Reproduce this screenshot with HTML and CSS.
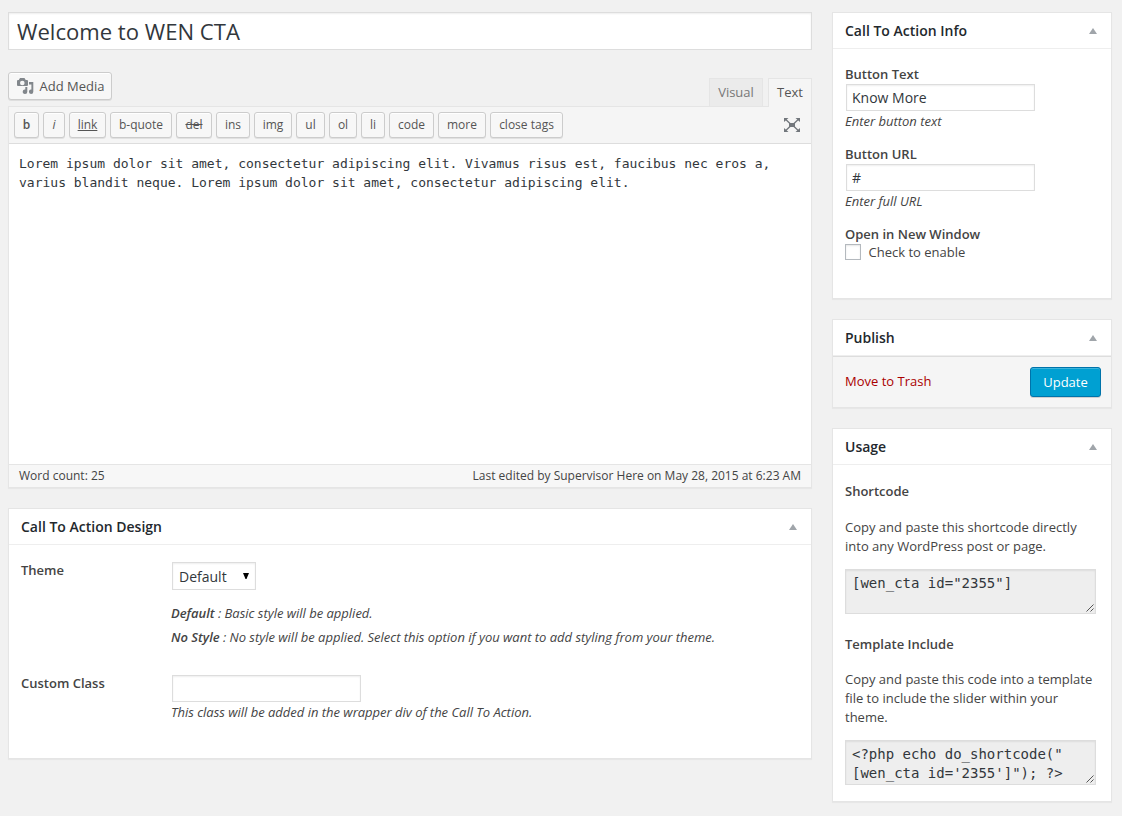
FILE: index.html
```html
<!DOCTYPE html>
<html lang="en">
<head>
<meta charset="utf-8">
<title>Edit Call To Action</title>
<link rel="stylesheet" href="styles.css">
</head>
<body>
<div class="page">
  <main class="main">
    <input class="title" type="text" value="Welcome to WEN CTA" aria-label="Title">
    <div class="editor-tools">
      <button class="btn add-media"><svg class="media-icon" viewBox="0 0 18 18" width="18" height="18"><path fill="#82878c" fill-rule="evenodd" d="M4 1h4.500l1.200 2H11q1 0 1 1V8q0 1-1 1H2q-1 0-1-1V4q0-1 1-1h.8zM6.300 3.700a2.300 2.300 0 1 0 0 4.600a2.300 2.300 0 0 0 0-4.600z"/><path fill="#82878c" d="M13 5h4.300v9.700a2.200 2.200 0 1 1-1.900-2.200V7.500H13zM9.300 10H11.300V14.700a2.300 2.300 0 1 1-2-2.200z"/></svg><span>Add Media</span></button>
      <div class="tabs"><a class="tab">Visual</a><a class="tab active">Text</a></div>
    </div>
    <section class="editor">
      <div class="toolbar">
        <button class="btn q w-b"><b>b</b></button><button class="btn q w-i"><i>i</i></button><button class="btn q w-link"><u>link</u></button><button class="btn q w-quote">b-quote</button><button class="btn q w-del"><s>del</s></button><button class="btn q w-ins">ins</button><button class="btn q w-img">img</button><button class="btn q w-ul">ul</button><button class="btn q w-ol">ol</button><button class="btn q w-li">li</button><button class="btn q w-code">code</button><button class="btn q w-more">more</button><button class="btn q w-close">close tags</button>
        <svg class="expand" viewBox="0 0 16 14" width="16" height="14"><g fill="#72777c"><path d="M5 5h6v4H5zM0 0h4.500L0 4zM16 0h-4.500L16 4zM0 14h4.500L0 10zM16 14h-4.500L16 10z"/><path fill="none" stroke="#72777c" stroke-width="1.300" d="M1.500 1.300L6 5.500M14.500 1.300L10 5.500M1.500 12.700L6 8.500M14.500 12.700L10 8.500"/></g></svg>
      </div>
      <div class="content">Lorem ipsum dolor sit amet, consectetur adipiscing elit. Vivamus risus est, faucibus nec eros a,<br>varius blandit neque. Lorem ipsum dolor sit amet, consectetur adipiscing elit.</div>
      <div class="status"><span>Word count: 25</span><span class="edited">Last edited by Supervisor Here on May 28, 2015 at 6:23 AM</span></div>
    </section>
    <section class="box design">
      <h2>Call To Action Design<span class="toggle"></span></h2>
      <div class="row theme">
        <label>Theme</label>
        <div>
          <div class="select">Default<svg class="caret" viewBox="0 0 6 6" width="6" height="6"><path d="M0 0h6L3.500 6h-1z"/></svg></div>
          <p class="note n1"><b>Default</b> : Basic style will be applied.</p>
          <p class="note n2"><b>No Style</b> : No style will be applied. Select this option if you want to add styling from your theme.</p>
        </div>
      </div>
      <div class="row">
        <label>Custom Class</label>
        <div><input class="field" type="text" aria-label="Custom Class"><p class="note n3">This class will be added in the wrapper div of the Call To Action.</p></div>
      </div>
    </section>
  </main>
  <aside class="side">
    <section class="box info">
      <h2>Call To Action Info<span class="toggle"></span></h2>
      <div class="group first"><label>Button Text</label><input class="field" type="text" value="Know More"><p class="note">Enter button text</p></div>
      <div class="group"><label>Button URL</label><input class="field" type="text" value="#"><p class="note">Enter full URL</p></div>
      <div class="group"><label>Open in New Window</label><div class="check"><span class="checkbox"></span><span>Check to enable</span></div></div>
    </section>
    <section class="box publish">
      <h2>Publish<span class="toggle"></span></h2>
      <div class="actions"><a class="trash">Move to Trash</a><button class="update">Update</button></div>
    </section>
    <section class="box usage">
      <h2>Usage<span class="toggle"></span></h2>
      <h4>Shortcode</h4>
      <p>Copy and paste this shortcode directly<br>into any WordPress post or page.</p>
      <div class="code">[wen_cta id="2355"]<svg class="grip" viewBox="0 0 8 8" width="8" height="8"><path d="M0.500 7.500l7-7M4.500 7.500l3-3"/></svg></div>
      <h4 class="second">Template Include</h4>
      <p>Copy and paste this code into a template<br>file to include the slider within your<br>theme.</p>
      <div class="code">&lt;?php echo do_shortcode("<br>[wen_cta id='2355']"); ?&gt;<svg class="grip" viewBox="0 0 8 8" width="8" height="8"><path d="M0.500 7.500l7-7M4.500 7.500l3-3"/></svg></div>
    </section>
  </aside>
</div>
</body>
</html>
```

FILE: styles.css
```css
* { box-sizing: border-box; }
body { margin: 0; background: #f1f1f1; color: #444; font: 13px/19px "Open Sans", sans-serif; }
h2, h4, p { margin: 0; }
input, button { font-family: inherit; margin: 0; }
b, label, h2, h4 { font-weight: 600; }
.page { display: flex; gap: 20px; padding: 12px 10px 0 8px; height: 816px; overflow: hidden; align-items: flex-start; }
.main { width: 804px; }
.side { width: 280px; }

.title { display: block; width: 804px; height: 38px; padding: 0 8px 1px; border: 1px solid #ddd; background: #fff; box-shadow: inset 0 1px 2px rgba(0,0,0,.07); font-size: 22.100px; color: #32373c; }
.editor-tools { display: flex; justify-content: space-between; align-items: flex-start; height: 56px; padding-top: 22px; }
.btn { border: 1px solid #ccc; border-radius: 3px; background: #f7f7f7; box-shadow: inset 0 1px 0 #fff, 0 1px 0 rgba(0,0,0,.08); color: #555; padding: 0; }
.add-media { display: flex; align-items: center; width: 104px; height: 28px; padding-left: 7px; font-size: 13px; line-height: 26px; white-space: nowrap; }
.media-icon { margin-right: 5.500px; flex: none; }
.tabs { display: flex; gap: 5px; padding-top: 6px; }
.tab { height: 28px; width: 54px; border: 1px solid #e5e5e5; border-bottom: 0; background: #ebebeb; color: #777; line-height: 26px; text-align: center; }
.tab.active { position: relative; width: 44px; height: 29px; background: #f5f5f5; color: #555; }

.editor { border: 1px solid #e5e5e5; background: #fff; box-shadow: 0 1px 1px rgba(0,0,0,.04); height: 382px; display: flex; flex-direction: column; }
.toolbar { display: flex; gap: 4px; height: 38px; padding: 5px 11px 5px 5px; background: #f5f5f5; border-bottom: 1px solid #ddd; height: 37px; }
.q { height: 26px; font-size: 12px; line-height: 24px; text-align: center; white-space: nowrap; }
.w-b { width: 25px; } .w-i { width: 22px; } .w-link { width: 37px; } .w-quote { width: 62px; }
.w-del { width: 36px; } .w-ins { width: 34px; } .w-img { width: 38px; } .w-ul { width: 29px; }
.w-ol { width: 28px; } .w-li { width: 24px; } .w-code { width: 45px; } .w-more { width: 48px; } .w-close { width: 73px; }
.expand { margin: 6px 0 0 auto; }
.content { flex: 1; padding: 10px; font: 13px/19px "DejaVu Sans Mono", monospace; color: #32373c; white-space: nowrap; }
.status { display: flex; justify-content: space-between; height: 23px; padding: 0 10px; border-top: 1px solid #e5e5e5; background: #f7f7f7; font-size: 12px; line-height: 22px; }

.box { border: 1px solid #e5e5e5; background: #fff; box-shadow: 0 1px 1px rgba(0,0,0,.04); }
.box h2 { display: flex; justify-content: space-between; align-items: center; height: 36px; padding: 0 14px 0 12px; border-bottom: 1px solid #eee; color: #23282d; font-size: 14px; line-height: 20px; }
.toggle { width: 8px; height: 6px; margin-top: 1px; background: #a0a5aa; clip-path: polygon(50% 0, 100% 100%, 0 100%); }
.note { font-style: italic; white-space: nowrap; }
.field { display: block; width: 189px; height: 27px; margin: 0 1px; padding: 0 5px; border: 1px solid #ddd; box-shadow: inset 0 1px 2px rgba(0,0,0,.07); color: #32373c; font-size: 14px; }

.design { height: 251px; margin-top: 20px; }
.design .note { letter-spacing: -.012px; }
.row { display: grid; grid-template-columns: 150px 1fr; padding-left: 12px; }
.row.theme { height: 130px; padding-top: 17px; }
.row label { margin-top: -1px; }
.select { display: flex; align-items: center; justify-content: space-between; width: 84px; height: 28px; margin-left: 1px; padding: 1px 6px 0; border: 1px solid #ddd; box-shadow: inset 0 1px 2px rgba(0,0,0,.07); color: #32373c; font-size: 14px; }
.caret { margin-bottom: 2px; }
.n1 { margin-top: 14px; }
.n2 { margin-top: 5px; }
.n3 { margin-top: 1px; }

.info { height: 287px; }
.group { padding: 14px 12px 0; height: 80px; }
.group.first { padding-top: 16px; height: 82px; }
.group label { display: block; height: 19px; }
.group .note { margin-top: 1px; }
.check { display: flex; gap: 7.500px; line-height: 17px; }
.checkbox { width: 16px; height: 16px; border: 1px solid #b4b9be; box-shadow: inset 0 1px 2px rgba(0,0,0,.1); }
.publish { height: 89px; margin-top: 20px; }
.actions { display: flex; justify-content: space-between; align-items: flex-start; height: 51px; padding: 10px 10px 0 12px; border-top: 1px solid #ddd; background: #f5f5f5; }
.trash { color: #a00; margin-top: 5px; }
.update { width: 71px; height: 30px; padding: 0; border: 1px solid #0073aa; border-radius: 3px; background: #00a0d2; box-shadow: inset 0 1px 0 rgba(120,200,230,.5), 0 1px 0 rgba(0,0,0,.15); color: #fff; font-size: 13px; }
.usage { height: 374px; margin-top: 20px; }
.usage h4 { margin: 17px 12px 17px; font-size: 13px; }
.usage h4.second { margin: 21px 12px 16px; }
.usage p { padding-left: 12px; white-space: nowrap; }
.code { position: relative; width: 251px; height: 45px; margin: 13px 0 0 12px; padding: 4px 6px; border: 1px solid #ddd; background: #eee; box-shadow: inset 0 1px 2px rgba(0,0,0,.07); color: #32373c; font: 14px/19px "DejaVu Sans Mono", monospace; white-space: nowrap; }
.grip { position: absolute; right: 1px; bottom: 1px; fill: none; stroke: #555; stroke-width: 1; }
```
